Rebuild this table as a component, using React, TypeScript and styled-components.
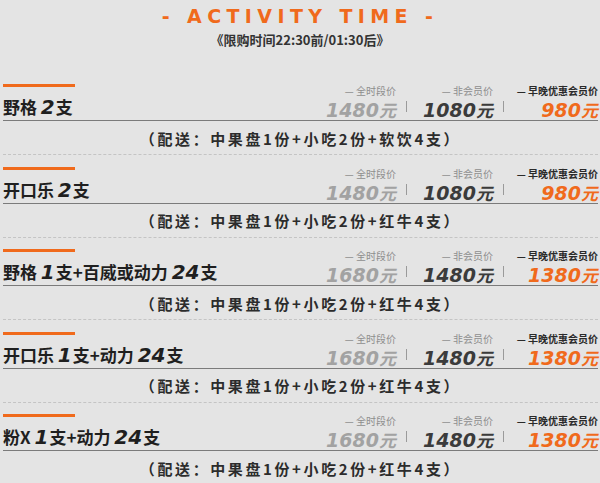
import React, { FC } from 'react';
import styled, { createGlobalStyle } from 'styled-components';

const GlobalStyle = createGlobalStyle`
html, body {
  margin: 0;
  padding: 0;
  background: #e4e4e4;
}
body {
  font-family: "Noto Sans CJK SC", "Noto Sans", sans-serif;
}
`;

const ORANGE = '#f06a1c';

const Page = styled.div`
width: 600px;
height: 483px;
overflow: hidden;
background: #e4e4e4;
`;

const Header = styled.header`
height: 84px;
display: flex;
flex-direction: column;
align-items: center;
`;

const Title = styled.h1`
margin: 5px 0 0 0;
font-family: "DejaVu Sans", "Liberation Sans", sans-serif;
font-weight: 700;
font-size: 19px;
line-height: 22px;
letter-spacing: 5.4px;
color: ${ORANGE};
white-space: nowrap;
`;

const Subtitle = styled.div`
margin-top: 5px;
font-size: 13px;
line-height: 16px;
font-weight: 700;
color: #333;
`;

const Block = styled.section`
height: 82.5px;
padding: 0 2px 0 3px;
box-sizing: border-box;
`;

const Top = styled.div`
height: 36px;
display: flex;
justify-content: space-between;
border-bottom: 1.5px solid #7b7b7b;
`;

const NameCol = styled.div`
display: flex;
flex-direction: column;
justify-content: space-between;
`;

const OrangeBar = styled.div`
width: 72px;
height: 3px;
background: ${ORANGE};
`;

const Name = styled.div`
font-size: 17px;
line-height: 20px;
font-weight: 700;
color: #1f1f1f;
padding-bottom: 3px;
white-space: nowrap;
`;

const Num = styled.span`
font-family: "DejaVu Sans", "Liberation Sans", sans-serif;
font-style: italic;
font-weight: 700;
font-size: 20px;
margin-right: 1px;
`;

const Prices = styled.div`
display: flex;
align-items: flex-start;
padding-top: 1px;
height: 36px;
`;

const PriceCol = styled.div<{ $w: number }>`
width: ${p => p.$w}px;
display: flex;
flex-direction: column;
align-items: flex-end;
`;

const Label = styled.div<{ $dark?: boolean }>`
font-size: 10px;
line-height: 11px;
height: 11px;
color: ${p => (p.$dark ? '#2a2a2a' : '#8e8e8e')};
font-weight: ${p => (p.$dark ? 700 : 400)};
white-space: nowrap;
`;

const Value = styled.div<{ $tone: 'light' | 'dark' | 'hot' }>`
font-family: "DejaVu Sans", "Noto Sans CJK SC", sans-serif;
font-style: italic;
font-weight: 700;
font-size: 19px;
line-height: 25px;
margin-top: 1px;
white-space: nowrap;
color: ${p => (p.$tone === 'light' ? '#a2a2a2' : p.$tone === 'dark' ? '#3b3b3b' : ORANGE)};
`;

const Yuan = styled.span`
font-family: "Noto Sans CJK SC", sans-serif;
font-weight: 700;
font-size: 17px;
`;

const Sep = styled.div<{ $w: number }>`
width: ${p => p.$w}px;
display: flex;
justify-content: center;
padding-top: 16px;
&::before {
  content: '';
  width: 1px;
  height: 11px;
  background: #9a9a9a;
}
`;

const Delivery = styled.div`
height: 34px;
display: flex;
align-items: center;
justify-content: center;
border-bottom: 1px dashed #c4c4c4;
font-size: 15px;
font-weight: 700;
letter-spacing: 2.6px;
color: #2c2c2c;
padding-top: 1px;
box-sizing: border-box;
`;

type Item = {
  name: string;
  prices: [number, number, number];
  drink: string;
};

const items: Item[] = [
  { name: '野格 2支', prices: [1480, 1080, 980], drink: '软饮' },
  { name: '开口乐 2支', prices: [1480, 1080, 980], drink: '红牛' },
  { name: '野格 1支+百威或动力 24支', prices: [1680, 1480, 1380], drink: '红牛' },
  { name: '开口乐 1支+动力 24支', prices: [1680, 1480, 1380], drink: '红牛' },
  { name: '粉X 1支+动力 24支', prices: [1680, 1480, 1380], drink: '红牛' },
];

const NameText: FC<{ text: string }> = ({ text }) => (
  <Name>
    {text.split(/(\d+)/).map((part, i) =>
      /^\d+$/.test(part) ? <Num key={i}>{part}</Num> : <span key={i}>{part}</span>
    )}
  </Name>
);

const Price: FC<{ v: number; tone: 'light' | 'dark' | 'hot' }> = ({ v, tone }) => (
  <Value $tone={tone}>
    {v}
    <Yuan>元</Yuan>
  </Value>
);

const App: FC = () => (
  <Page>
    <GlobalStyle />
    <Header>
      <Title>- ACTIVITY TIME -</Title>
      <Subtitle>《限购时间22:30前/01:30后》</Subtitle>
    </Header>
    {items.map(item => (
      <Block key={item.name}>
        <Top>
          <NameCol>
            <OrangeBar />
            <NameText text={item.name} />
          </NameCol>
          <Prices>
            <PriceCol $w={80}>
              <Label>— 全时段价</Label>
              <Price v={item.prices[0]} tone="light" />
            </PriceCol>
            <Sep $w={20} />
            <PriceCol $w={77}>
              <Label>— 非会员价</Label>
              <Price v={item.prices[1]} tone="dark" />
            </PriceCol>
            <Sep $w={20} />
            <PriceCol $w={85}>
              <Label $dark>— 早晚优惠会员价</Label>
              <Price v={item.prices[2]} tone="hot" />
            </PriceCol>
          </Prices>
        </Top>
        <Delivery>（配送：中果盘1份+小吃2份+{item.drink}4支）</Delivery>
      </Block>
    ))}
  </Page>
);

export default App;
